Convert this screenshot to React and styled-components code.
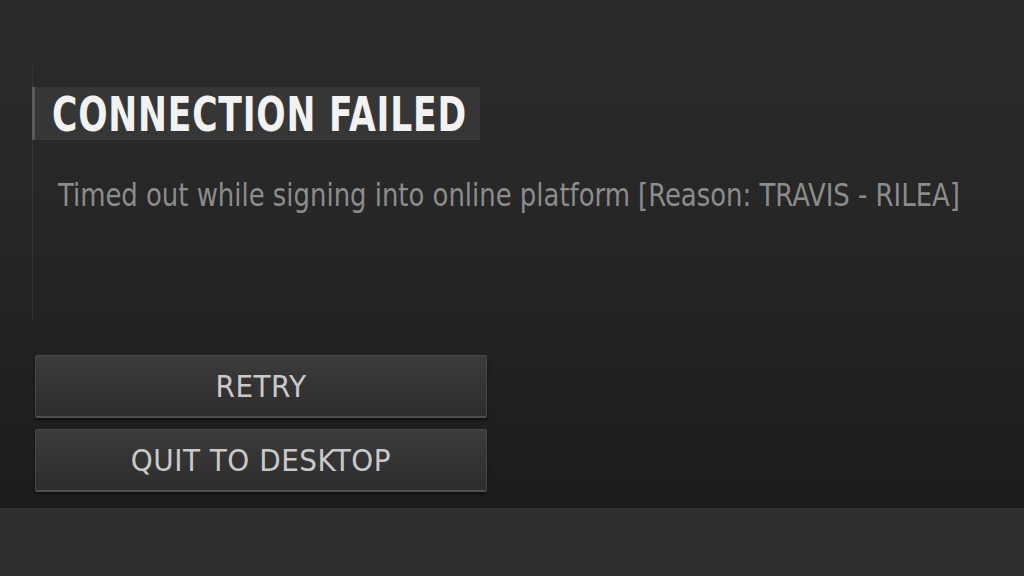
import React from "react";
import styled, { createGlobalStyle } from "styled-components";

const Global = createGlobalStyle`
  html, body { margin: 0; padding: 0; background: #2f2f2f; }
  body { width: 1024px; height: 576px; overflow: hidden; }
`;

const Page = styled.div`
  width: 1024px;
  height: 576px;
  display: flex;
  flex-direction: column;
  font-family: "DejaVu Sans Condensed", "DejaVu Sans", sans-serif;
`;

const Screen = styled.div`
  height: 508px;
  background: linear-gradient(180deg, #2b2b2b 0%, #272727 40%, #1c1c1c 100%);
  padding: 65px 0 0 32px;
  box-sizing: border-box;
  display: flex;
  flex-direction: column;
`;

const Dialog = styled.div`
  border-left: 1px solid #353535;
  height: 255px;
  display: flex;
  flex-direction: column;
  padding-top: 22px;
  box-sizing: border-box;
`;

const TitleBox = styled.div`
  align-self: flex-start;
  width: 448px;
  height: 53px;
  box-sizing: border-box;
  background: #363636;
  border-left: 3px solid #5a5a5a;
  margin-left: -1px;
  display: flex;
  align-items: center;
  padding-left: 17px;
`;

const Title = styled.h1`
  margin: 0;
  font-size: 48px;
  font-weight: bold;
  color: #f2f2f2;
  letter-spacing: 1px;
  transform: scaleX(0.8);
  transform-origin: left center;
  white-space: nowrap;
  line-height: 1;
`;

const Message = styled.p`
  margin: 39px 0 0 25px;
  font-size: 32px;
  color: #8c8c8c;
  letter-spacing: 0px;
  transform: scaleX(0.9);
  transform-origin: left center;
  white-space: nowrap;
  line-height: 1;
`;

const Buttons = styled.div`
  margin-top: 35px;
  margin-left: 3px;
  display: flex;
  flex-direction: column;
  gap: 11px;
`;

const Button = styled.button`
  width: 452px;
  height: 63px;
  box-sizing: border-box;
  background: linear-gradient(180deg, #3c3c3c 0%, #333333 55%, #2d2d2d 100%);
  border: 1px solid #474747;
  border-bottom: 2px solid #4e4e4e;
  border-radius: 2px;
  box-shadow: 0 2px 3px rgba(0, 0, 0, 0.5);
  display: flex;
  align-items: center;
  justify-content: center;
  padding: 0;
  cursor: pointer;
`;

const Label = styled.span`
  font-family: "DejaVu Sans Condensed", "DejaVu Sans", sans-serif;
  font-size: 31px;
  color: #c9c9c9;
  letter-spacing: 0.5px;
  white-space: nowrap;
  line-height: 1;
`;

const Band = styled.div`
  flex: 1;
  background: #2f2f2f;
`;

export default function App() {
  return (
    <>
      <Global />
      <Page>
        <Screen>
          <Dialog>
            <TitleBox>
              <Title>CONNECTION FAILED</Title>
            </TitleBox>
            <Message>Timed out while signing into online platform [Reason: TRAVIS - RILEA]</Message>
          </Dialog>
          <Buttons>
            <Button><Label>RETRY</Label></Button>
            <Button><Label>QUIT TO DESKTOP</Label></Button>
          </Buttons>
        </Screen>
        <Band />
      </Page>
    </>
  );
}
